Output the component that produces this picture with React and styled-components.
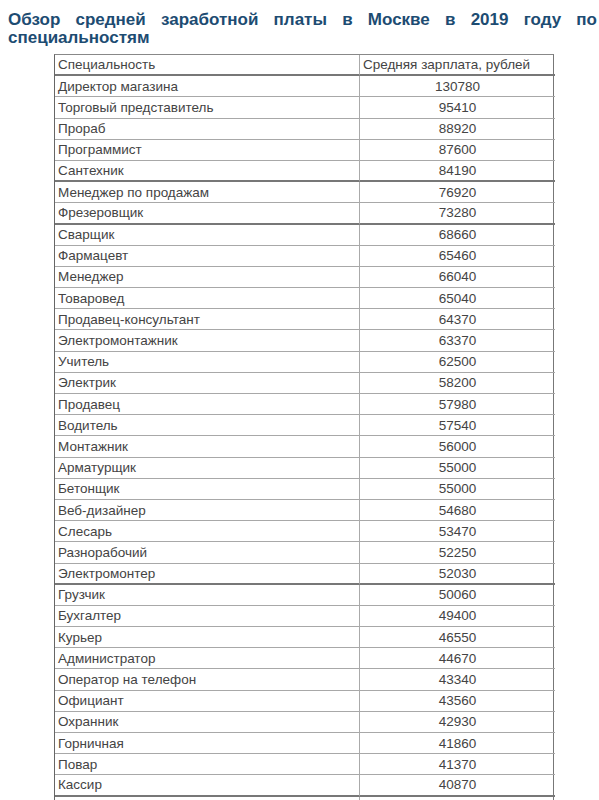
import { Fragment } from "react";
import styled, { createGlobalStyle } from "styled-components";

const GlobalStyle = createGlobalStyle`
  html, body {
    margin: 0;
    background: #fff;
  }
  body {
    font-family: "Liberation Sans", Arial, sans-serif;
  }
`;

const Page = styled.div`
  padding: 11px 2px 0 8px;
  height: 800px;
  overflow: hidden;
  box-sizing: border-box;
`;

const Title = styled.h2`
  margin: 0;
  font-size: 17px;
  line-height: 18px;
  font-weight: bold;
  color: #1d4c72;
  text-align: justify;
  word-spacing: 2px;
`;

const Table = styled.div`
  margin: 7px 0 0 46px;
  width: 500px;
  display: grid;
  grid-template-columns: 304px 196px;
  grid-auto-rows: 21.2px;
  border-left: 1px solid #666;
  border-right: 1px solid #777;
  border-top: 1px solid #888;
  box-sizing: border-box;
  color: #444;
  font-size: 13.5px;
`;

const Cell = styled.div`
  display: flex;
  align-items: center;
  padding: 0 3px;
  border-bottom: ${(p) => (p.$strong ? "2px solid #777" : "1px solid #a8a8a8")};
  border-left: ${(p) => (p.$num ? "1px solid #aaa" : "none")};
  justify-content: ${(p) => (p.$num && !p.$head ? "center" : "flex-start")};
  box-sizing: border-box;
  white-space: nowrap;
  overflow: hidden;
`;

const rows = [
  ["Директор магазина", "130780"],
  ["Торговый представитель", "95410"],
  ["Прораб", "88920"],
  ["Программист", "87600"],
  ["Сантехник", "84190", true],
  ["Менеджер по продажам", "76920"],
  ["Фрезеровщик", "73280", true],
  ["Сварщик", "68660"],
  ["Фармацевт", "65460"],
  ["Менеджер", "66040"],
  ["Товаровед", "65040"],
  ["Продавец-консультант", "64370"],
  ["Электромонтажник", "63370"],
  ["Учитель", "62500"],
  ["Электрик", "58200"],
  ["Продавец", "57980"],
  ["Водитель", "57540"],
  ["Монтажник", "56000"],
  ["Арматурщик", "55000"],
  ["Бетонщик", "55000"],
  ["Веб-дизайнер", "54680"],
  ["Слесарь", "53470"],
  ["Разнорабочий", "52250"],
  ["Электромонтер", "52030", true],
  ["Грузчик", "50060"],
  ["Бухгалтер", "49400"],
  ["Курьер", "46550"],
  ["Администратор", "44670"],
  ["Оператор на телефон", "43340"],
  ["Официант", "43560"],
  ["Охранник", "42930"],
  ["Горничная", "41860"],
  ["Повар", "41370"],
  ["Кассир", "40870", true],
  ["", ""],
];

export default function App() {
  return (
    <Page>
      <GlobalStyle />
      <Title>Обзор средней заработной платы в Москве в 2019 году по специальностям</Title>
      <Table>
        <Cell $strong>Специальность</Cell>
        <Cell $strong $num $head>
          Средняя зарплата, рублей
        </Cell>
        {rows.map(([name, pay, strong], i) => (
          <Fragment key={i}>
            <Cell $strong={strong}>{name}</Cell>
            <Cell $strong={strong} $num>{pay}</Cell>
          </Fragment>
        ))}
      </Table>
    </Page>
  );
}
